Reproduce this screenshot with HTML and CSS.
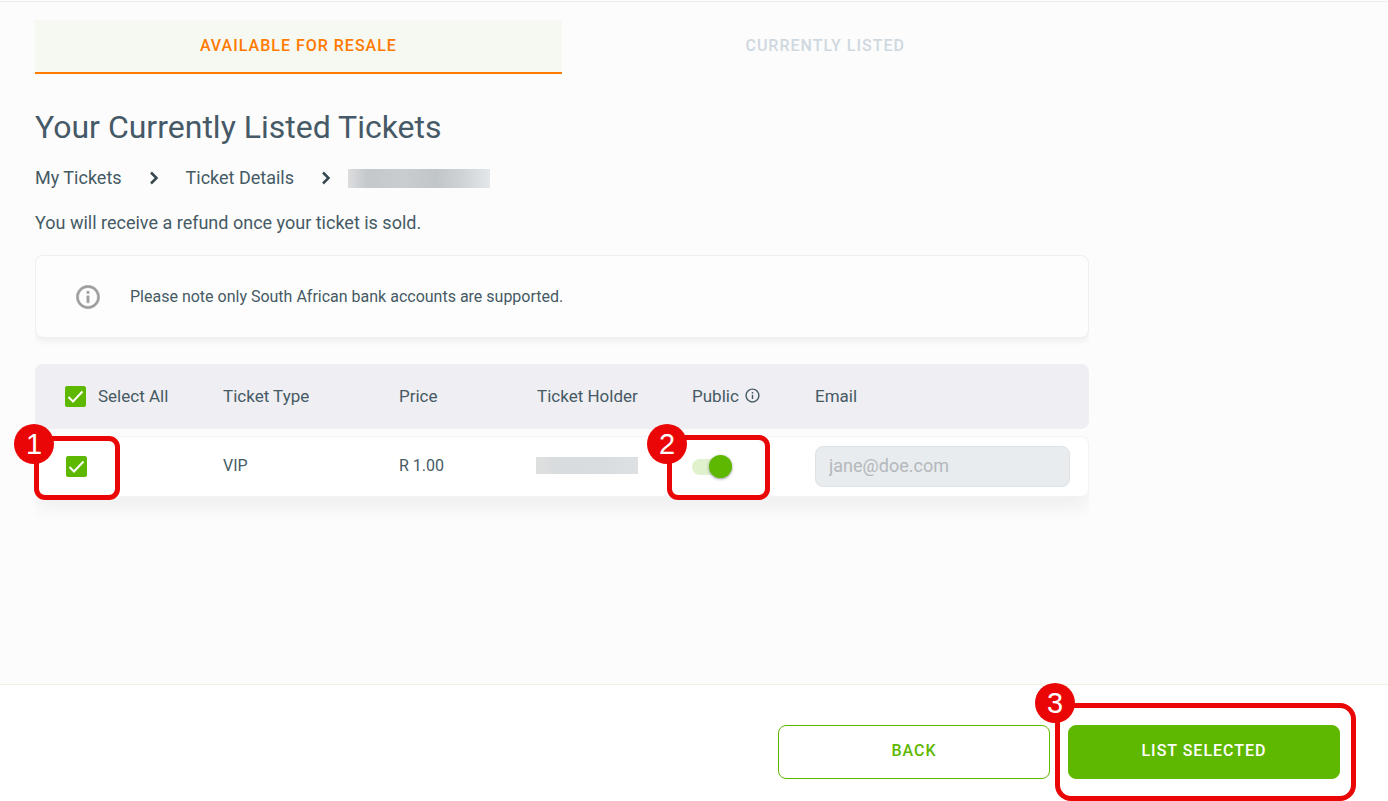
FILE: index.html
```
<!DOCTYPE html>
<html lang="en">
<head>
<meta charset="utf-8">
<meta name="viewport" content="width=device-width, initial-scale=1">
<title>Ticket Resale</title>
<link rel="stylesheet" href="styles.css">
</head>
<body>
<main class="page">
  <div class="content">
    <nav class="tabs" aria-label="Resale">
      <button class="tab tab-active" type="button">AVAILABLE FOR RESALE</button>
      <button class="tab" type="button">CURRENTLY LISTED</button>
    </nav>

    <h1 class="title">Your Currently Listed Tickets</h1>

    <nav class="crumbs" aria-label="Breadcrumb">
      <a class="crumb" href="#tickets">My Tickets</a>
      <svg class="chevron" viewBox="0 0 10 14" aria-hidden="true"><path d="M2 1.500 7.500 7 2 12.500"/></svg>
      <a class="crumb" href="#details">Ticket Details</a>
      <svg class="chevron" viewBox="0 0 10 14" aria-hidden="true"><path d="M2 1.500 7.500 7 2 12.500"/></svg>
      <span class="redacted redacted-crumb"></span>
    </nav>

    <p class="lead">You will receive a refund once your ticket is sold.</p>

    <div class="clip">
      <section class="note">
        <svg class="note-icon" viewBox="0 0 24 24" aria-hidden="true"><path d="M11 7h2v2h-2zm0 4h2v6h-2zm1-9C6.480 2 2 6.480 2 12s4.480 10 10 10 10-4.480 10-10S17.520 2 12 2zm0 18c-4.410 0-8-3.590-8-8s3.590-8 8-8 8 3.590 8 8-3.590 8-8 8z"/></svg>
        <p class="note-text">Please note only South African bank accounts are supported.</p>
      </section>
    </div>

    <div class="tickets">
      <div class="clip">
        <table class="table">
          <thead>
            <tr>
              <th class="col-select"><label class="select-all"><input class="check" type="checkbox" checked><span>Select All</span></label></th>
              <th class="col-type">Ticket Type</th>
              <th class="col-price">Price</th>
              <th class="col-holder">Ticket Holder</th>
              <th class="col-public"><span class="with-icon">Public <svg class="info-icon" viewBox="0 0 24 24" aria-hidden="true"><path d="M11 7h2v2h-2zm0 4h2v6h-2zm1-9C6.480 2 2 6.480 2 12s4.480 10 10 10 10-4.480 10-10S17.520 2 12 2zm0 18c-4.410 0-8-3.590-8-8s3.590-8 8-8 8 3.590 8 8-3.590 8-8 8z"/></svg></span></th>
              <th class="col-email">Email</th>
            </tr>
          </thead>
          <tbody>
            <tr class="ticket-row">
              <td><input class="check" type="checkbox" aria-label="Select VIP ticket" checked></td>
              <td>VIP</td>
              <td>R 1.00</td>
              <td><span class="redacted redacted-holder"></span></td>
              <td><input class="switch" type="checkbox" role="switch" aria-label="Public" checked></td>
              <td><input class="email" type="email" aria-label="Email" placeholder="jane@doe.com" disabled></td>
            </tr>
          </tbody>
        </table>
      </div>
      <div class="callout callout-select"><span class="badge">1</span></div>
      <div class="callout callout-public"><span class="badge">2</span></div>
    </div>
  </div>
</main>

<footer class="footer">
  <button class="button button-outline" type="button">BACK</button>
  <div class="marked">
    <button class="button button-solid" type="button">LIST SELECTED</button>
    <div class="callout callout-list"><span class="badge">3</span></div>
  </div>
</footer>
</body>
</html>
```
FILE: styles.css
```
* { box-sizing: border-box; }

body {
  margin: 0;
  min-height: 100vh;
  display: flex;
  flex-direction: column;
  background: #fcfcfc;
  border-top: 1px solid #fcfcfc;
  color: #455a64;
  font-family: Roboto, "Liberation Sans", sans-serif;
  font-size: 16px;
  line-height: 24px;
}

.page {
  flex: 1;
  padding: 18px 36px 0 35px;
  border-top: 1px solid #eeeeee;
}

.content { width: 80%; }

h1, p { margin: 0; font-weight: 400; }

.tabs { display: grid; grid-template-columns: 1fr 1fr; }

.tab {
  height: 54px;
  padding: 0;
  border: 0;
  border-bottom: 2px solid transparent;
  background: none;
  color: #cfd8e0;
  font: 500 16px/24px Roboto, "Liberation Sans", sans-serif;
  letter-spacing: 1px;
}

.tab-active {
  background: #f6f8f2;
  border-color: #ff7a00;
  color: #ff7a00;
}

.title {
  margin-top: 33px;
  font-size: 32px;
  line-height: 40px;
  color: #465967;
}

.crumbs {
  display: flex;
  align-items: center;
  margin-top: 19px;
  font-size: 18px;
}

.crumb { color: inherit; text-decoration: none; }

.chevron {
  width: 10px;
  height: 14px;
  margin: 0 27px;
  fill: none;
  stroke: #37474f;
  stroke-width: 2.500;
}

.chevron:nth-of-type(2) { margin-right: 17px; }

.redacted { display: block; }

.redacted-crumb {
  width: 142px;
  height: 19px;
  background: linear-gradient(90deg, #dcdddf, #c3c8cb 14%, #cacdd0 38%, #c1c6c9 62%, #d0d4d7 82%, #e4e8ea);
}

.redacted-holder {
  width: 102px;
  height: 17px;
  margin-left: -1px;
  background: linear-gradient(90deg, #dfdfdf, #d8dcde 22%, #d9dddf 70%, #dde1e4);
}

.lead { margin-top: 21px; font-size: 18px; }

.clip { overflow: hidden; }

.note {
  display: flex;
  align-items: center;
  gap: 28px;
  min-height: 83px;
  margin: 20px 0 19px;
  padding: 0 38px;
  border: 1px solid #efefef;
  border-radius: 8px;
  background: #fdfdfd;
  box-shadow: 0 4px 6px rgba(0, 0, 0, 0.05);
}

.note-icon { width: 28px; height: 28px; fill: #9e9e9e; stroke: #9e9e9e; stroke-width: 0.400; }

.tickets { position: relative; }

.table {
  width: 100%;
  margin-bottom: 26px;
  table-layout: fixed;
  border-collapse: separate;
  border-spacing: 0 7px;
}

th, td { padding: 0 0 2px; text-align: left; }

th {
  height: 65px;
  background: #efeef3;
  font-size: 17px;
  font-weight: 400;
}

th:first-child { padding: 0 0 0 30px; border-radius: 8px 0 0 8px; }
th:last-child { border-radius: 0 8px 8px 0; }

.col-select { width: 188px; }
.col-type { width: 176px; }
.col-price { width: 138px; }
.col-holder { width: 155px; }
.col-public { width: 123px; }

.select-all { display: flex; align-items: center; gap: 12px; }
.select-all span { padding-bottom: 2px; }

.with-icon { display: flex; align-items: center; gap: 5px; }
.info-icon { width: 17px; height: 17px; fill: #455a64; }

.ticket-row {
  border-radius: 8px;
  box-shadow: 0 12px 18px rgba(0, 0, 0, 0.05);
}

td {
  height: 61px;
  background: #ffffff;
  border: solid #f1f3f8;
  border-width: 1px 0;
}

td:first-child { padding: 0 0 0 30px; border-left-width: 1px; border-radius: 8px 0 0 8px; }
td:last-child { padding: 0 18px 0 0; border-right-width: 1px; border-radius: 0 8px 8px 0; }

.check {
  appearance: none;
  display: block;
  width: 21px;
  height: 21px;
  margin: 0;
  border: 1px solid #5fb800;
  border-radius: 2px;
}

.check:checked {
  background: #5fb800 url("data:image/svg+xml,%3Csvg xmlns='http://www.w3.org/2000/svg' viewBox='0 0 21 21'%3E%3Cpath d='M3.500 11 8 15.500 17.500 5.500' fill='none' stroke='white' stroke-width='2'/%3E%3C/svg%3E") center / 21px 21px no-repeat;
}

.switch {
  appearance: none;
  display: flex;
  align-items: center;
  width: 40px;
  height: 16px;
  margin: 2px 0 0;
  border-radius: 8px;
  background: #dff1cd;
}

.switch::before {
  content: "";
  width: 23px;
  height: 23px;
  flex: none;
  border-radius: 50%;
  background: #5fb800;
  box-shadow: 0 1px 3px rgba(0, 0, 0, 0.4);
}

.switch:checked { justify-content: flex-end; }

.email {
  display: block;
  width: 100%;
  height: 41px;
  padding: 0 13px 2px;
  border: 1px solid #dde2e6;
  border-radius: 8px;
  background: #e8ecef;
  font: 400 18px/24px Roboto, "Liberation Sans", sans-serif;
}

.email::placeholder { color: #b4b8bb; }

.footer {
  display: flex;
  justify-content: flex-end;
  gap: 18px;
  padding: 40px 48px 22px;
  background: #ffffff;
  border-top: 1px solid #e9f3df;
}

.button {
  display: block;
  width: 272px;
  height: 54px;
  padding: 0 0 2px;
  border: 1px solid #5fb800;
  border-radius: 8px;
  font: 500 16px/24px Roboto, "Liberation Sans", sans-serif;
  letter-spacing: 1px;
}

.button-outline { background: #ffffff; color: #5fb800; }
.button-solid { background: #5fb800; color: #ffffff; }

.marked { position: relative; }

/* Numbered step markers drawn over the controls */
.callout {
  position: absolute;
  border: 5px solid #ea0606;
  border-radius: 11px;
  pointer-events: none;
}

.badge {
  position: absolute;
  top: -17px;
  left: -25px;
  width: 40px;
  height: 40px;
  border-radius: 50%;
  background: #ea0606;
  color: #ffffff;
  font: 400 29px/40px "Liberation Sans", Arial, sans-serif;
  text-align: center;
}

.callout-select { top: 79px; left: -1px; width: 86px; height: 64px; }
.callout-public { top: 78px; left: 632px; width: 103px; height: 65px; }
.callout-public .badge { top: -16px; }
.callout-list { top: -22px; left: -13px; right: -16px; bottom: -22px; border-radius: 16px; }
.callout-list .badge { top: -25px; }
```
